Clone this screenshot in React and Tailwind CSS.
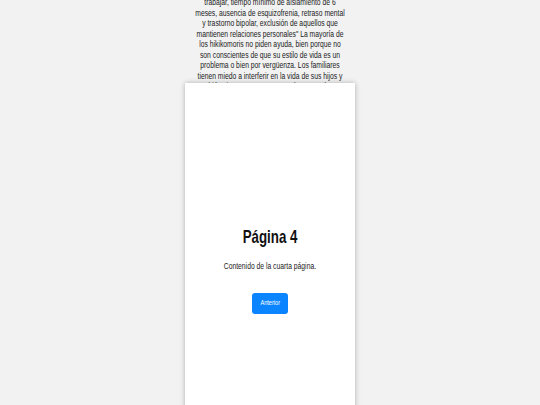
const lines = [
  "trabajar, tiempo mínimo de aislamiento de 6",
  "meses, ausencia de esquizofrenia, retraso mental",
  "y trastorno bipolar, exclusión de aquellos que",
  "mantienen relaciones personales\" La mayoría de",
  "los hikikomoris no piden ayuda, bien porque no",
  "son conscientes de que su estilo de vida es un",
  "problema o bien por vergüenza. Los familiares",
  "tienen miedo a interferir en la vida de sus hijos y",
  "también sienten vergüenza, por lo que tardan en",
  "buscar ayuda profesional para sus hijos.",
];

export default function App() {
  return (
    <div
      className="relative w-[540px] h-[405px] overflow-hidden bg-[#f2f2f2] text-[#1a1a1a]"
      style={{ fontFamily: '"Liberation Sans", Arial, sans-serif' }}
    >
      <div className="flex justify-center mt-[-3px]">
        <p className="w-[200px] text-center text-[8.8px] leading-[10.5px] scale-x-[0.77]">
          {lines.map((l, i) => (
            <span key={i} className="block whitespace-nowrap">{l}</span>
          ))}
        </p>
      </div>

      {/* page card */}
      <div className="absolute left-[185px] top-[83px] w-[170px] h-[380px] bg-white shadow-[0_0_5px_rgba(0,0,0,0.28)] flex flex-col items-center pt-[143px]">
        <h1 className="text-[18.5px] leading-[22px] font-bold text-[#111] scale-x-[0.72]">Página 4</h1>
        <p className="mt-[13px] text-[8.8px] leading-[10px] text-[#1a1a1a] scale-x-[0.77]">Contenido de la cuarta página.</p>
        <button className="mt-[22px] w-[36px] h-[21px] rounded-[3px] bg-[#0a84ff] text-white text-[7px]">
          <span className="inline-block scale-x-[0.8]">Anterior</span>
        </button>
      </div>
    </div>
  );
}
